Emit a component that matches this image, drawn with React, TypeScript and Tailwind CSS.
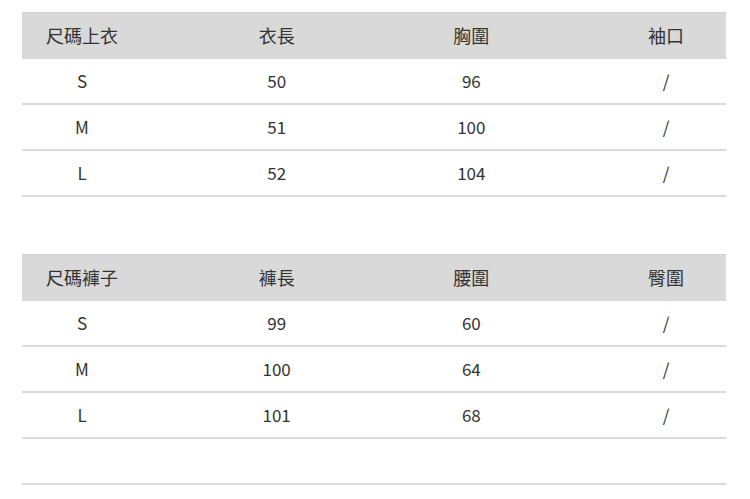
const font = { fontFamily: '"Noto Sans CJK TC", "Noto Sans", sans-serif' }

interface SizeTable {
  head: string[]
  rows: string[][]
}

const tables: SizeTable[] = [
  {
    head: ["尺碼上衣", "衣長", "胸圍", "袖口"],
    rows: [
      ["S", "50", "96", "/"],
      ["M", "51", "100", "/"],
      ["L", "52", "104", "/"],
    ],
  },
  {
    head: ["尺碼褲子", "褲長", "腰圍", "臀圍"],
    rows: [
      ["S", "99", "60", "/"],
      ["M", "100", "64", "/"],
      ["L", "101", "68", "/"],
      ["", "", "", ""],
    ],
  },
]

function Row({ cells, head }: { cells: string[]; head?: boolean }) {
  return (
    <div
      className={`grid grid-cols-[120px_120px_120px_120px] gap-x-[74.67px] items-center ${
        head
          ? "h-[47px] pb-[3px] bg-[#d9d9d9] border-t border-[#cfcfcf] text-[18px]"
          : "h-[46px] pb-[1px] border-b-2 border-[#dadada] text-[17px]"
      }`}
    >
      {cells.map((c, i) => (
        <div key={i} className="text-center leading-none text-[#333]">
          {c}
        </div>
      ))}
    </div>
  )
}

export default function App() {
  return (
    <div className="w-[750px] h-[499px] bg-white overflow-hidden" style={font}>
      <div className="ml-[22px] w-[704px] pt-[12px]">
        {tables.map((t, i) => (
          <div key={i} className={i > 0 ? "mt-[57px]" : ""}>
            <Row cells={t.head} head />
            {t.rows.map((r, j) => (
              <Row key={j} cells={r} />
            ))}
          </div>
        ))}
      </div>
    </div>
  )
}
